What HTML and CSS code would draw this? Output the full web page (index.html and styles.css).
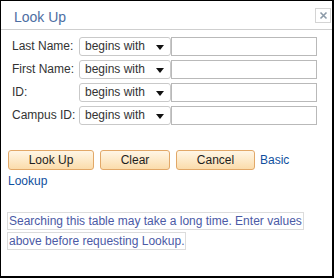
FILE: index.html
```html
<!DOCTYPE html>
<html>
<head>
<meta charset="utf-8">
<link rel="stylesheet" href="styles.css">
</head>
<body>
<div class="dialog">
  <div class="header">
    <div class="title">Look Up</div>
    <div class="close"><svg width="9" height="9" viewBox="0 0 9 9"><path d="M1.5 1.5L7.5 7.5M7.5 1.5L1.5 7.5" stroke="#8c9aa8" stroke-width="1.6"/></svg></div>
  </div>
  <div class="form">
    <div class="label">Last Name:</div>
    <div class="select"><span>begins with</span><svg class="arrow" width="8" height="5" viewBox="0 0 8 5"><path d="M0 0H8L4 5Z" fill="#111"/></svg></div>
    <div class="input"></div>
    <div class="label">First Name:</div>
    <div class="select"><span>begins with</span><svg class="arrow" width="8" height="5" viewBox="0 0 8 5"><path d="M0 0H8L4 5Z" fill="#111"/></svg></div>
    <div class="input"></div>
    <div class="label">ID:</div>
    <div class="select"><span>begins with</span><svg class="arrow" width="8" height="5" viewBox="0 0 8 5"><path d="M0 0H8L4 5Z" fill="#111"/></svg></div>
    <div class="input"></div>
    <div class="label">Campus ID:</div>
    <div class="select"><span>begins with</span><svg class="arrow" width="8" height="5" viewBox="0 0 8 5"><path d="M0 0H8L4 5Z" fill="#111"/></svg></div>
    <div class="input"></div>
  </div>
  <div class="actions"><span class="btn b1">Look Up</span><span class="btn b2">Clear</span><span class="btn b3">Cancel</span><span class="link">Basic</span> <span class="link">Lookup</span></div>
  <div class="note"><span>Searching this table may take a long time. Enter values above before requesting Lookup.</span></div>
</div>
</body>
</html>
```
FILE: styles.css
```css
* { box-sizing: border-box; }
html, body { margin: 0; padding: 0; background: #fff; }
body { font-family: "Liberation Sans", Arial, sans-serif; font-size: 12px; color: #333; }
.dialog {
  width: 334px;
  height: 278px;
  border-style: solid;
  border-color: #000;
  border-width: 1px 2px 2px 1px;
  background: #fff;
}
.header {
  height: 29px;
  border-bottom: 1px solid #cfcfcf;
  display: flex;
  justify-content: space-between;
  align-items: flex-start;
}
.title {
  padding: 6px 0 0 13px;
  font-size: 14px;
  line-height: 20px;
  color: #4d6ea3;
}
.close {
  margin: 7px 1px 0 0;
  width: 16px;
  height: 15px;
  border: 1px solid #d4d4d4;
  display: flex;
  align-items: center;
  justify-content: center;
}
.close svg { display: block; }
.form {
  padding: 7px 0 0 11px;
  display: grid;
  grid-template-columns: 67px 90px 144px;
  grid-auto-rows: 19px;
  column-gap: 2px;
  row-gap: 4px;
}
.label { line-height: 19px; color: #333; margin-right: -2px; }
.select {
  margin-left: -2px;
  border: 1px solid #c9c9c9;
  border-radius: 3px;
  background: #fff;
  display: flex;
  align-items: center;
  justify-content: space-between;
  padding: 0 6px 0 5px;
  line-height: 17px;
  color: #333;
}
.arrow { display: block; margin-top: 1px; }
.input {
  margin-left: -2px;
  border: 1px solid #b9b9b9;
  background: #fff;
}
.actions {
  margin-top: 25px;
  padding-left: 7px;
  line-height: 21px;
  width: 300px;
}
.btn {
  display: inline-block;
  height: 20px;
  line-height: 18px;
  padding: 0;
  text-align: center;
  border: 1px solid #e2a868;
  border-radius: 3px;
  background: linear-gradient(#fff6e6, #fbdcab);
  color: #1e1e1e;
  vertical-align: baseline;
  margin-right: 6px;
}
.b1 { width: 86px; }
.b2 { width: 70px; }
.b3 { width: 79px; margin-right: 5px; }
.link { color: #0f4f9e; cursor: pointer; }
.note {
  margin-top: 19px;
  padding-left: 6px;
  line-height: 20px;
  color: #4b5aa6;
}
.note span {
  border: 1px solid #dcdcdc;
  padding: 1px 1px;
  -webkit-box-decoration-break: clone;
  box-decoration-break: clone;
}
```
